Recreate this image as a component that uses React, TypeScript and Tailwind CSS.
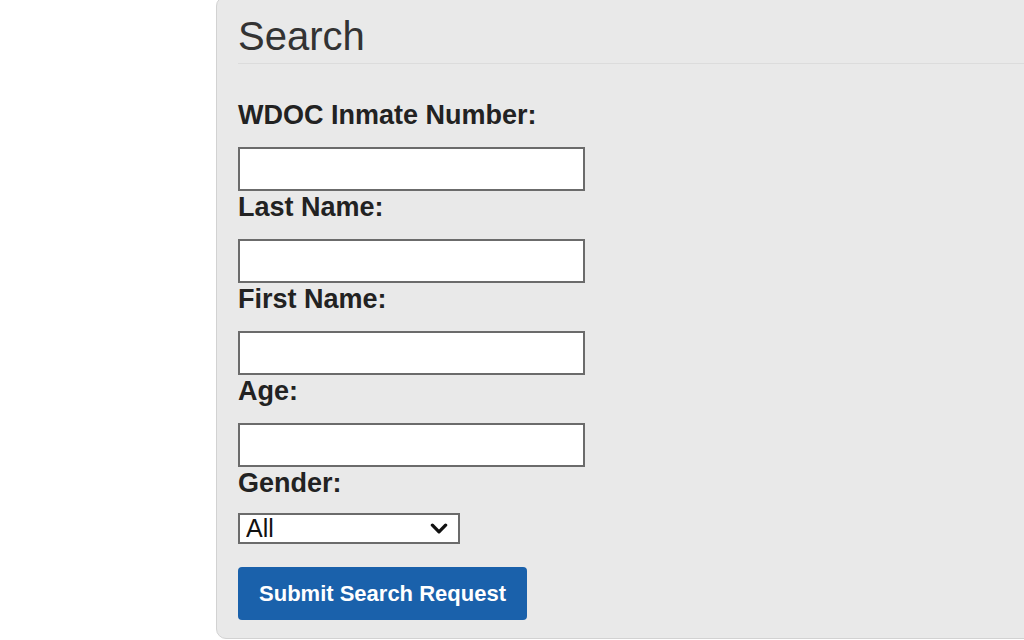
import { useState } from 'react';

const fields = ['WDOC Inmate Number:', 'Last Name:', 'First Name:', 'Age:'];

function Chevron() {
  return (
    <svg viewBox="0 0 16 10" className="w-[18px] h-[11px]" fill="none">
      <path d="M2 2l6 6 6-6" stroke="#111" strokeWidth="3" strokeLinecap="round" strokeLinejoin="round" />
    </svg>
  );
}

export default function App() {
  const [gender, setGender] = useState('All');

  return (
    <div className="w-[1024px] h-[640px] bg-white overflow-hidden font-['Liberation_Sans',Arial,sans-serif]">
      <div className="ml-[216px] mt-[-4px] w-[900px] h-[643px] bg-[#e9e9e9] border border-[#d2d2d2] rounded-[10px] pl-[21px]">
        <div className="h-[67px] border-b border-[#dcdcdc] pt-[18px]">
          <h2 className="text-[40px] leading-[42px] text-[#333]">Search</h2>
        </div>

        <form className="pt-[35px]" onSubmit={(e) => e.preventDefault()}>
          {fields.map((label) => (
            <div key={label}>
              <label className="block text-[27px] leading-[32px] font-bold text-[#222] mb-[16px]">{label}</label>
              <input
                type="text"
                className="block w-[347px] h-[44px] bg-white border-2 border-[#6b6b6b] outline-none"
              />
            </div>
          ))}

          <label className="block text-[27px] leading-[32px] font-bold text-[#222] mb-[14px]">Gender:</label>
          <div className="relative w-[222px] h-[31px]">
            <select
              value={gender}
              onChange={(e) => setGender(e.target.value)}
              className="appearance-none w-full h-full bg-white border-2 border-[#6b6b6b] pl-[6px] text-[25px] leading-[27px] text-[#111] outline-none"
            >
              <option>All</option>
              <option>Male</option>
              <option>Female</option>
            </select>
            <div className="absolute right-[12px] top-[10px] pointer-events-none">
              <Chevron />
            </div>
          </div>

          <button
            type="submit"
            className="mt-[23px] w-[289px] h-[53px] bg-[#1a61ab] rounded-[4px] text-white text-[22px] font-bold"
          >
            Submit Search Request
          </button>
        </form>
      </div>
    </div>
  );
}
